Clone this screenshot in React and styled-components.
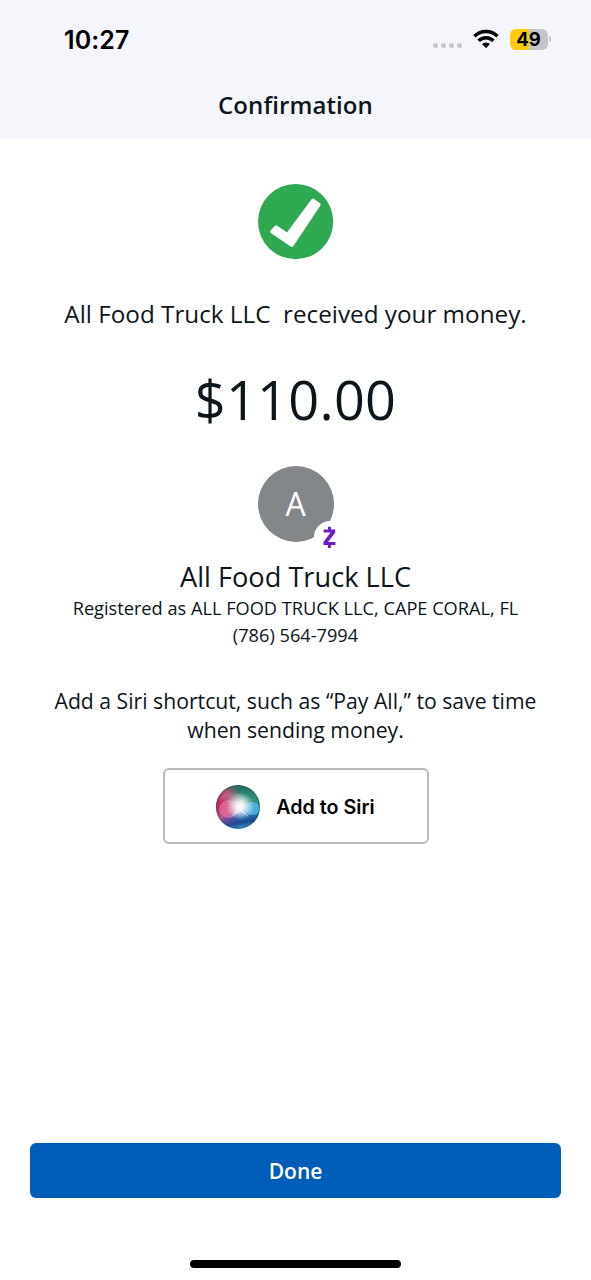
import React from 'react';
import styled, { createGlobalStyle } from 'styled-components';

const GlobalStyle = createGlobalStyle`
  * {
    box-sizing: border-box;
  }
  body {
    margin: 0;
    background: #ffffff;
    color: #0d151c;
    font-family: 'Open Sans', 'Noto Sans', sans-serif;
  }
`;

const Screen = styled.div`
  width: 591px;
  height: 1280px;
  display: flex;
  flex-direction: column;
  overflow: hidden;
`;

const Header = styled.header`
  height: 138px;
  flex: none;
  background: #f4f6fb;
`;

const StatusBar = styled.div`
  height: 78px;
  padding: 0 40px 0 64px;
  display: flex;
  align-items: center;
  justify-content: space-between;
  color: #000000;
  font-family: Inter, sans-serif;
`;

const Time = styled.div`
  font-size: 25px;
  font-weight: 600;
  letter-spacing: 0.1px;
  line-height: 30px;
  padding-top: 2px;
`;

const StatusIcons = styled.div`
  display: flex;
  align-items: center;
`;

const Dots = styled.div`
  display: flex;
  gap: 3px;
  margin: 13px 11px 0 0;
`;

const Dot = styled.i`
  width: 5px;
  height: 5px;
  border-radius: 50%;
  background: #c5c7cb;
`;

const Battery = styled.div`
  width: 38px;
  height: 21px;
  margin-left: 11px;
  padding-right: 1px;
  border-radius: 6px;
  background: linear-gradient(to right, #fccb0a 49%, #c4c5c9 49%);
  font-size: 18.5px;
  font-weight: 700;
  line-height: 21px;
  text-align: center;
`;

const BatteryTip = styled.div`
  width: 2px;
  height: 6px;
  margin-left: 1px;
  border-radius: 0 2px 2px 0;
  background: #c4c5c9;
`;

const Title = styled.h1`
  margin: 0;
  padding-top: 11px;
  font-size: 24px;
  font-weight: 600;
  line-height: 32px;
  letter-spacing: 0.1px;
  text-align: center;
`;

const Content = styled.main`
  flex: 1;
  display: flex;
  flex-direction: column;
  align-items: center;
  padding-top: 46px;
`;

const Message = styled.p`
  margin: 38px 0 0;
  font-size: 24.25px;
  line-height: 32px;
  white-space: pre;
`;

const Amount = styled.div`
  margin-top: 33px;
  font-size: 54px;
  line-height: 72px;
  letter-spacing: 0.3px;
`;

const Avatar = styled.div`
  position: relative;
  width: 76px;
  height: 76px;
  margin-top: 31px;
  border-radius: 50%;
  background: #83878a;
  color: #ffffff;
  font-size: 32px;
  line-height: 76px;
  text-align: center;
`;

const ZelleBadge = styled.div`
  position: absolute;
  left: 56px;
  top: 55px;
  width: 32px;
  height: 32px;
  border-radius: 50%;
  background: #ffffff;
  display: flex;
`;

const Name = styled.h2`
  margin: 17px 0 0;
  font-size: 27.2px;
  font-weight: 400;
  line-height: 36px;
`;

const Detail = styled.div`
  font-size: 18.2px;
  line-height: 27px;
`;

const SiriHint = styled.p`
  width: 500px;
  margin: 37px 0 0;
  font-size: 21.2px;
  line-height: 29px;
  text-align: center;
`;

const SiriButton = styled.button`
  width: 266px;
  height: 76px;
  margin-top: 24px;
  padding: 1px 0 0;
  display: flex;
  align-items: center;
  justify-content: center;
  gap: 16px;
  border: 2px solid #b9b9b9;
  border-radius: 6px;
  background: #ffffff;
  color: #000000;
  font-family: Inter, sans-serif;
  font-size: 19.7px;
  font-weight: 600;
`;

const Footer = styled.footer`
  flex: none;
  height: 137px;
  padding: 0 30px;
  display: flex;
  flex-direction: column;
  align-items: center;
`;

const DoneButton = styled.button`
  width: 531px;
  height: 55px;
  padding: 0;
  border: none;
  border-radius: 6px;
  background: #005eb9;
  color: #ffffff;
  font-family: inherit;
  font-size: 21px;
  font-weight: 600;
`;

const HomeIndicator = styled.div`
  width: 211px;
  height: 8px;
  margin-top: 62px;
  border-radius: 4px;
  background: #000000;
`;

const WifiIcon = () => (
  <svg width="26" height="20" viewBox="0 0 26 20" fill="none" stroke="#000" strokeWidth="3.5">
    <path d="M1.5 7.2a16.6 16.6 0 0 1 23 0" />
    <path d="M5.6 11.7a10.6 10.6 0 0 1 14.8 0" />
    <path d="M13 19.2l-4-4.2a5.8 5.8 0 0 1 8 0z" fill="#000" stroke="none" />
  </svg>
);

const CheckIcon = () => (
  <svg width="76" height="76" viewBox="0 0 76 76">
    <circle cx="37.6" cy="37.6" r="37.6" fill="#2ea951" />
    <path
      d="M14.2 47.6L18.2 43.4L29.4 51.2L55 16.6L60.6 20.6L33.8 60.8z"
      fill="#fff"
      stroke="#fff"
      strokeWidth="4"
      strokeLinejoin="round"
    />
  </svg>
);

const ZelleIcon = () => (
  <svg width="32" height="32" viewBox="0 0 32 32" fill="#6a1bd0">
    <path d="M9.6 8.6h11.6v3.2l-7.2 9.2h7.4v3H9.4v-3.1l7.2-9.3h-7z" />
    <path d="M14 5.7h2.9v3.5H14zM14 23.4h2.9v3.5H14z" />
  </svg>
);

const SiriIcon = () => (
  <svg width="44" height="44" viewBox="0 0 44 44">
    <defs>
      <linearGradient id="base" x1="0.4" y1="0" x2="0.55" y2="1">
        <stop offset="0" stopColor="#20695b" />
        <stop offset="0.4" stopColor="#2f957a" />
        <stop offset="0.66" stopColor="#2c7cb8" />
        <stop offset="0.86" stopColor="#174a91" />
        <stop offset="1" stopColor="#3d9ed8" />
      </linearGradient>
      <radialGradient id="pink" cx="0.05" cy="0.42" r="0.55">
        <stop offset="0" stopColor="#c3265c" />
        <stop offset="0.55" stopColor="#d34b7c" stopOpacity="0.9" />
        <stop offset="1" stopColor="#d34b7c" stopOpacity="0" />
      </radialGradient>
      <radialGradient id="glow" cx="0.55" cy="0.48" r="0.32">
        <stop offset="0" stopColor="#fff" />
        <stop offset="0.3" stopColor="#fff" stopOpacity="0.85" />
        <stop offset="1" stopColor="#fff" stopOpacity="0" />
      </radialGradient>
      <clipPath id="orb">
        <circle cx="22" cy="22" r="22" />
      </clipPath>
    </defs>
    <g clipPath="url(#orb)">
      <rect width="44" height="44" fill="url(#base)" />
      <rect width="44" height="44" fill="url(#pink)" />
      <path d="M5 12C13 5 24 6 32 17L24 24z" fill="#8ba9a0" opacity="0.25" />
      <path d="M22 24L7 33c3 7 9 10 14 10z" fill="#50409a" opacity="0.4" />
      <circle cx="12.5" cy="24" r="8.5" fill="#ef83b5" fillOpacity="0.5" stroke="#f0a6c9" strokeOpacity="0.35" />
      <ellipse cx="36.5" cy="23.5" rx="7.5" ry="6.5" fill="#55bdec" fillOpacity="0.75" />
      <rect width="44" height="44" fill="url(#glow)" />
      <path d="M23 20l10 12-8-5-9 4z" fill="#fff" opacity="0.45" />
      <circle cx="22" cy="22" r="21.3" fill="none" stroke="#173e55" strokeOpacity="0.35" strokeWidth="1.4" />
    </g>
  </svg>
);

const App = () => {
  return (
    <Screen>
      <GlobalStyle />
      <Header>
        <StatusBar>
          <Time>10:27</Time>
          <StatusIcons>
            <Dots>
              {[0, 1, 2, 3].map(dot => (
                <Dot key={dot} />
              ))}
            </Dots>
            <WifiIcon />
            <Battery>49</Battery>
            <BatteryTip />
          </StatusIcons>
        </StatusBar>
        <Title>Confirmation</Title>
      </Header>
      <Content>
        <CheckIcon />
        <Message>{'All Food Truck LLC  received your money.'}</Message>
        <Amount>$110.00</Amount>
        <Avatar>
          A
          <ZelleBadge>
            <ZelleIcon />
          </ZelleBadge>
        </Avatar>
        <Name>All Food Truck LLC</Name>
        <Detail>Registered as ALL FOOD TRUCK LLC, CAPE CORAL, FL</Detail>
        <Detail>(786) 564-7994</Detail>
        <SiriHint>
          Add a Siri shortcut, such as “Pay All,” to save time when sending money.
        </SiriHint>
        <SiriButton>
          <SiriIcon />
          Add to Siri
        </SiriButton>
      </Content>
      <Footer>
        <DoneButton>Done</DoneButton>
        <HomeIndicator />
      </Footer>
    </Screen>
  );
};

export default App;
